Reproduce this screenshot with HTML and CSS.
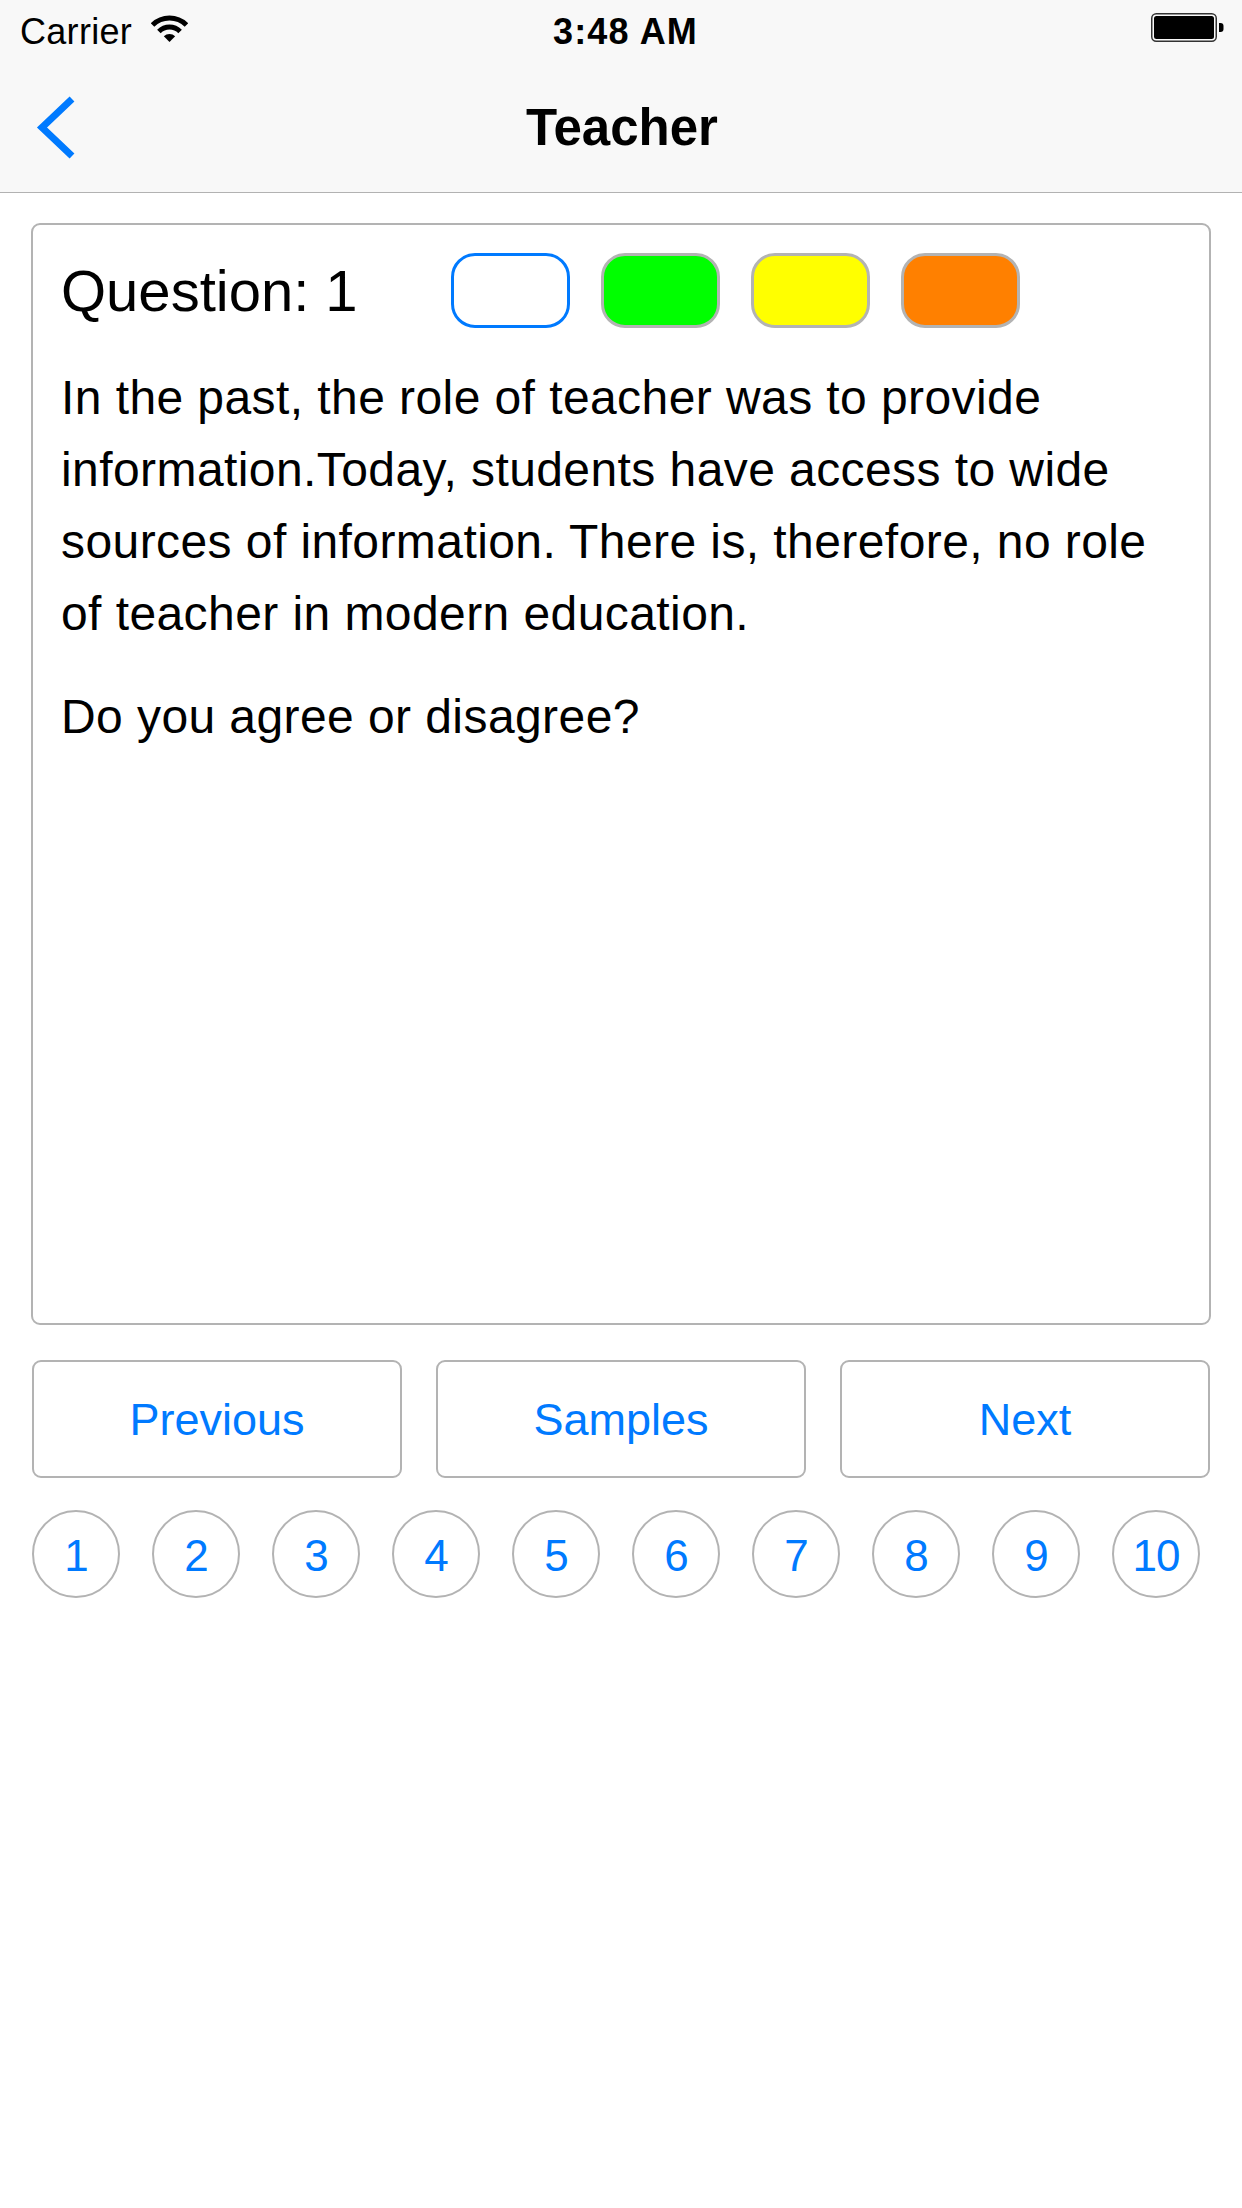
FILE: index.html
```html
<!DOCTYPE html>
<html lang="en">
<head>
<meta charset="utf-8">
<title>Teacher</title>
<link rel="stylesheet" href="styles.css">
</head>
<body>
<header class="topbar">
  <div class="status">
    <div class="status-left">
      <span class="carrier">Carrier</span>
      <svg class="wifi" width="37" height="28" viewBox="0 0 37 28" aria-hidden="true">
        <path d="M1.53 10.03 A24 24 0 0 1 35.47 10.03" fill="none" stroke="#000" stroke-width="5"/>
        <path d="M7.9 16.4 A15 15 0 0 1 29.1 16.4" fill="none" stroke="#000" stroke-width="5"/>
        <path d="M18.5 27 L12.84 21.34 A8 8 0 0 1 24.16 21.34 Z" fill="#000"/>
      </svg>
    </div>
    <div class="status-time">3:48 AM</div>
    <div class="status-right">
      <svg class="battery" width="74" height="30" viewBox="0 0 74 30" aria-hidden="true">
        <rect x="0.75" y="0.75" width="64.5" height="27.5" rx="4.5" fill="none" stroke="#333" stroke-width="1.5"/>
        <rect x="3" y="3" width="60" height="23" rx="2.5" fill="#000"/>
        <path d="M68 10 h1.5 a3 3 0 0 1 3 3 v3 a3 3 0 0 1 -3 3 h-1.5 Z" fill="#000"/>
      </svg>
    </div>
  </div>
  <nav class="navbar">
    <div class="nav-left">
      <button class="back" type="button" aria-label="Back">
        <svg width="50" height="66" viewBox="0 0 50 66" aria-hidden="true">
          <path d="M42 5 L12 33.5 L42 62" fill="none" stroke="#007aff" stroke-width="7"/>
        </svg>
      </button>
    </div>
    <h1 class="title">Teacher</h1>
    <div class="nav-right"></div>
  </nav>
</header>

<main class="content">
  <section class="card">
    <div class="q-head">
      <h2 class="q-label">Question: 1</h2>
      <div class="swatches">
        <span class="swatch swatch-white"></span>
        <span class="swatch swatch-green"></span>
        <span class="swatch swatch-yellow"></span>
        <span class="swatch swatch-orange"></span>
      </div>
    </div>
    <div class="q-body">
      <p>In the past, the role of teacher was to provide information.Today, students have access to wide sources of information. There is, therefore, no role of teacher in modern education.</p>
      <p>Do you agree or disagree?</p>
    </div>
  </section>

  <div class="actions">
    <button class="action" type="button">Previous</button>
    <button class="action" type="button">Samples</button>
    <button class="action" type="button">Next</button>
  </div>

  <div class="pages">
    <button class="page" type="button">1</button>
    <button class="page" type="button">2</button>
    <button class="page" type="button">3</button>
    <button class="page" type="button">4</button>
    <button class="page" type="button">5</button>
    <button class="page" type="button">6</button>
    <button class="page" type="button">7</button>
    <button class="page" type="button">8</button>
    <button class="page" type="button">9</button>
    <button class="page" type="button">10</button>
  </div>
</main>
</body>
</html>
```

FILE: styles.css
```css
* {
  box-sizing: border-box;
}

html, body {
  margin: 0;
  padding: 0;
  background: #ffffff;
}

body {
  width: 1242px;
  min-height: 2208px;
  font-family: "Liberation Sans", Arial, sans-serif;
  color: #000;
}

/* ---------- top bar ---------- */
.topbar {
  background: #f8f8f8;
  border-bottom: 1px solid #b2b2b2;
}

.status {
  height: 60px;
  display: grid;
  grid-template-columns: 1fr auto 1fr;
  align-items: center;
  padding: 3px 17px 0 20px;
}

.status-left {
  display: flex;
  align-items: center;
  gap: 19px;
}

.carrier {
  font-size: 36px;
  line-height: 1;
  letter-spacing: 0.3px;
}

.wifi {
  display: block;
  margin-top: -6px;
}

.status-time {
  font-size: 36px;
  font-weight: bold;
  line-height: 1;
  letter-spacing: 1.2px;
  padding-left: 6px;
}

.status-right {
  display: flex;
  justify-content: flex-end;
}

.battery {
  display: block;
  margin-top: -8px;
}

.navbar {
  height: 132px;
  display: grid;
  grid-template-columns: 1fr auto 1fr;
  align-items: center;
}

.nav-left {
  padding-left: 30px;
}

.back {
  display: block;
  border: 0;
  padding: 0;
  margin: 1px 0 0 0;
  background: transparent;
}

.back svg {
  display: block;
}

.title {
  margin: 0;
  font-size: 51px;
  font-weight: bold;
  line-height: 1;
  padding-top: 2px;
  padding-left: 2px;
}

/* ---------- content ---------- */
.content {
  padding-top: 30px;
}

.card {
  margin: 0 31px;
  height: 1102px;
  border: 2px solid #b3b3b3;
  border-radius: 9px;
  padding: 28px 28px 0 28px;
}

.q-head {
  display: flex;
  align-items: center;
  height: 75px;
}

.q-label {
  flex: 0 0 390px;
  margin: 0;
  font-size: 58px;
  font-weight: normal;
  line-height: 1;
}

.swatches {
  display: flex;
  gap: 31px;
}

.swatch {
  display: block;
  width: 119px;
  height: 75px;
  border-radius: 24px;
  border: 3px solid #b3b3b3;
}

.swatch-white {
  background: #ffffff;
  border-color: #007aff;
}

.swatch-green {
  background: #00ff00;
}

.swatch-yellow {
  background: #ffff00;
}

.swatch-orange {
  background: #ff8000;
}

.q-body {
  margin-top: 34px;
}

.q-body p {
  margin: 0 0 31px 0;
  font-size: 48px;
  line-height: 72px;
  letter-spacing: 0.42px;
}

/* ---------- action buttons ---------- */
.actions {
  margin: 35px 32px 0 32px;
  display: flex;
  gap: 34px;
}

.action {
  flex: 1 1 0;
  height: 118px;
  background: #fff;
  border: 2px solid #b3b3b3;
  border-radius: 9px;
  font-family: "Liberation Sans", Arial, sans-serif;
  font-size: 45px;
  color: #007aff;
  padding: 0;
  padding-top: 2px;
}

/* ---------- page circles ---------- */
.pages {
  margin: 32px 0 0 0;
  padding-left: 32px;
  display: flex;
  gap: 32px;
}

.page {
  width: 88px;
  height: 88px;
  border-radius: 50%;
  border: 2px solid #b3b3b3;
  background: #fff;
  padding: 0;
  padding-top: 4px;
  font-family: "Liberation Sans", Arial, sans-serif;
  font-size: 44px;
  color: #007aff;
  letter-spacing: -1px;
}
```
